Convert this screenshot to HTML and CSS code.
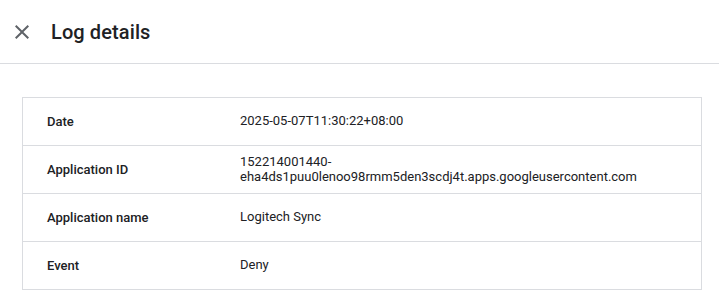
FILE: index.html
```html
<!DOCTYPE html>
<html lang="en">
<head>
  <meta charset="UTF-8" />
  <meta name="viewport" content="width=device-width, initial-scale=1.0" />
  <title>Log details</title>
  <link rel="stylesheet" href="styles.css">
</head>
<body>

  <header class="dialog-header">
    <button class="close-button" aria-label="Close">
      <svg viewBox="0 0 24 24" width="24" height="24">
        <path d="M19 6.41L17.59 5 12 10.59 6.41 5 5 6.41 10.59 12 5 17.59 6.41 19 12 13.41 17.59 19 19 17.59 13.41 12z" />
      </svg>
    </button>
    <h1>Log details</h1>
  </header>

  <div class="details">
    <div class="row">
      <div class="label">Date</div>
      <div class="value">2025-05-07T11:30:22+08:00</div>
    </div>
    <div class="row">
      <div class="label">Application ID</div>
      <div class="value">152214001440-eha4ds1puu0lenoo98rmm5den3scdj4t.apps.googleusercontent.com</div>
    </div>
    <div class="row">
      <div class="label">Application name</div>
      <div class="value">Logitech Sync</div>
    </div>
    <div class="row">
      <div class="label">Event</div>
      <div class="value">Deny</div>
    </div>
  </div>

</body>
</html>
```

FILE: styles.css
```css
body {
  margin: 0;
  padding: 0;
  background: #ffffff;
  font-family: Roboto, "Liberation Sans", sans-serif;
  color: #202124;
}

.dialog-header {
  display: flex;
  align-items: center;
  height: 63px;
  padding-left: 10px;
  border-bottom: 1px solid #dadce0;
}

.close-button {
  display: flex;
  width: 24px;
  height: 24px;
  padding: 0;
  border: none;
  background: none;
  cursor: pointer;
}

.close-button svg {
  fill: #5f6368;
}

h1 {
  margin: 0 0 0 17px;
  font-size: 20px;
  font-weight: 500;
  letter-spacing: 0.1px;
}

.details {
  margin: 33px 17px 0 22px;
  border: 1px solid #dadce0;
  border-bottom: none;
}

.row {
  display: grid;
  grid-template-columns: 193px 1fr;
  align-items: center;
  min-height: 47px;
  padding: 0 24px;
  border-bottom: 1px solid #dadce0;
  font-size: 13px;
}

.label {
  font-weight: 500;
}

.value {
  line-height: 14.5px;
  color: #202124;
}
```
